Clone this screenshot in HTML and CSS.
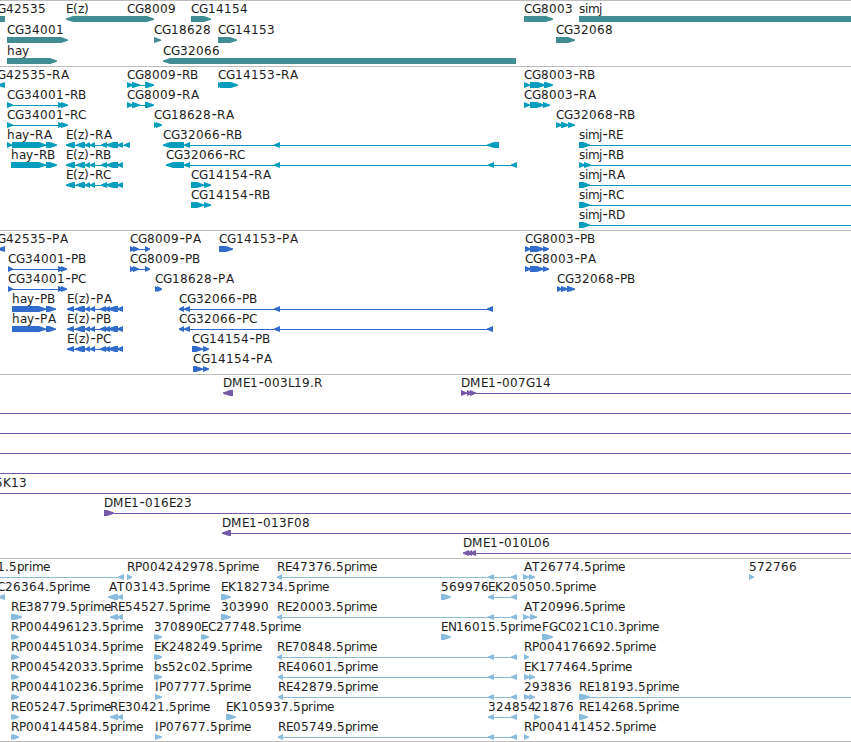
FILE: index.html
```
<!DOCTYPE html>
<html lang="en">
<head>
<meta charset="utf-8">
<title>Genome tracks</title>
<link rel="stylesheet" href="styles.css">
</head>
<body>
<main class="browser" id="browser"></main>
<script src="tracks.js"></script>
</body>
</html>
```
FILE: styles.css
```
body {
  margin: 0;
  background: #fff;
}

.browser {
  display: flex;
  flex-direction: column;
  width: 851px;
  height: 742px;
  box-sizing: border-box;
  overflow: hidden;
  border-bottom: 1px solid #bdbdbd;
}

.track {
  display: flex;
  flex-direction: column;
  flex: none;
  border-top: 1px solid #bdbdbd;
  padding-bottom: 3px;
}

.row {
  display: block;
  flex: none;
  width: 851px;
  height: 20px;
  overflow: visible;
}

.row text {
  font-family: "DejaVu Sans", sans-serif;
  font-size: 12px;
  fill: #1c1c1c;
}

.row .dash {
  font-size: 15px;
}

.row path {
  fill: currentColor;
}

.gene {
  color: #408e94;
  padding-bottom: 2px;
}

.gene .row {
  height: 21px;
}

.transcript {
  color: #059dbd;
}

.protein {
  color: #316ccc;
}

.bac {
  color: #7558a8;
}

.est {
  color: #89bbdd;
  padding-bottom: 2px;
}
```
FILE: tracks.js
```
// Each feature: "label|start|strand|exons". Strand is +, - or = (no arrow).
// An exon that ends in * runs on past the edge of the view.
const EZ = '66-75,76-85,85-90,90-95,101-107,106-118,117-123';
const EZP = '67-74,75-85,85-90,90-95,100-106,104-110,108-118,117-123';
const RE = ',488-494,511-517';
const tracks = [
  ['gene', [
    ['CG42535|-11|=|-5-5', 'E(z)|66|-|66-140', 'CG8009|127|+|127-154', 'CG14154|191|+|191-211', 'CG8003|524|+|524-553', 'simj|579|=|579-860'],
    ['CG34001|7|+|7-68', 'CG18628|154|+|154-161', 'CG14153|218|+|218-237', 'CG32068|556|+|556-575'],
    ['hay|7|+|7-57', 'CG32066|163|-|163-516']
  ]],
  ['transcript', [
    ['CG42535-RA|-11|-|-2-5', 'CG8009-RB|127|+|127-133,132-140,145-154', 'CG14153-RA|218|+|218-223,220-238', 'CG8003-RB|524|+|524-530,530-545,544-553'],
    ['CG34001-RB|7|+|7-13,58-64,61-68', 'CG8009-RA|127|+|127-133,132-140,145-154', 'CG8003-RA|524|+|524-530,530-544,543-550'],
    ['CG34001-RC|7|+|7-13,58-64,61-68', 'CG18628-RA|154|+|154-159,156-162', 'CG32068-RB|556|+|556-562,561-569,568-575'],
    ['hay-RA|7|+|7-12,12-46,46-57', 'E(z)-RA|66|-|' + EZ + ',124-130', 'CG32066-RB|163|-|163-184,184-190,274-280,487-499', 'simj-RE|579|+|579-590,*'],
    ['hay-RB|11|+|11-46,46-57', 'E(z)-RB|66|-|' + EZ, 'CG32066-RC|166|-|166-184,184-190,274-280,488-494,511-517', 'simj-RB|579|+|579-585,584-591,*'],
    ['E(z)-RC|66|-|' + EZ, 'CG14154-RA|191|+|191-204,204-211', 'simj-RA|579|+|579-590,*'],
    ['CG14154-RB|191|+|191-204,204-211', 'simj-RC|579|+|579-590,*'],
    ['simj-RD|579|+|579-590,*']
  ]],
  ['protein', [
    ['CG42535-PA|-11|-|-2-5', 'CG8009-PA|130|+|130-135,133-139,145-150', 'CG14153-PA|219|+|219-233', 'CG8003-PB|525|+|525-531,530-544,543-549'],
    ['CG34001-PB|8|+|8-13,58-64,61-67', 'CG8009-PB|130|+|130-135,133-139,145-150', 'CG8003-PA|525|+|525-531,530-544,543-549'],
    ['CG34001-PC|8|+|8-13,58-64,61-67', 'CG18628-PA|155|+|155-159,157-162', 'CG32068-PB|557|+|557-562,561-568,567-575'],
    ['hay-PB|12|+|12-46,46-56', 'E(z)-PA|67|-|' + EZP, 'CG32066-PB|179|-|179-184,184-190,274-280,487-493'],
    ['hay-PA|12|+|12-46,46-56', 'E(z)-PB|67|-|' + EZP, 'CG32066-PC|179|-|179-184,184-190,274-280,487-493'],
    ['E(z)-PC|67|-|' + EZP, 'CG14154-PB|192|+|192-203,203-209'],
    ['CG14154-PA|193|+|193-203,203-209']
  ]],
  ['bac', [
    ['DME1-003L19.R|223|-|223-233', 'DME1-007G14|461|+|461-467,467-472,470-476,*'],
    ['|-10|+|*'], ['|-10|+|*'], ['|-10|+|*'], ['|-10|+|*'],
    ['5K13|-5|+|*'],
    ['DME1-016E23|104|+|104-114,*'],
    ['DME1-013F08|222|-|222-231,*'],
    ['DME1-010L06|463|-|463-469,467-472,470-476,*']
  ]],
  ['est', [
    ['1.5prime|-3|-|-9--4,118-124', 'RP004242978.5prime|127|+|127-132', 'RE47376.5prime|277|-|277-282' + RE, 'AT26774.5prime|523|+|523-529,529-535', '572766|749|+|749-754'],
    ['C26364.5prime|-3|-|-2-5', 'AT03143.5prime|108|-|108-118,117-123', 'EK182734.5prime|221|+|221-231', '569976|441|+|441-451', 'EK205050.5prime|488|-|488-494,511-517'],
    ['RE38779.5prime|11|+|11-22', 'RE54527.5prime|110|-|110-118,117-123', '303990|221|+|221-231', 'RE20003.5prime|277|-|277-282' + RE, 'AT20996.5prime|523|+|523-529,530-537'],
    ['RP004496123.5prime|11|+|11-16,13-19', '370890|154|+|154-159,156-162', 'EC27748.5prime|201|+|201-206,203-209', 'EN16015.5prime|441|+|441-451', 'FGC021C10.3prime|542|+|542-553'],
    ['RP004451034.5prime|11|+|11-16,13-19', 'EK248249.5prime|154|+|154-159,156-162', 'RE70848.5prime|277|-|277-282' + RE, 'RP004176692.5prime|524|+|524-529'],
    ['RP004542033.5prime|11|+|11-16,13-19', 'bs52c02.5prime|154|+|154-159,156-162', 'RE40601.5prime|278|-|278-283' + RE, 'EK177464.5prime|524|+|524-530,529-535'],
    ['RP004410236.5prime|11|+|11-16,13-19', 'IP07777.5prime|155|+|155-162', 'RE42879.5prime|278|-|278-283' + RE, '293836|524|+|524-530,529-535', 'RE18193.5prime|579|+|579-590,*'],
    ['RE05247.5prime|11|+|11-16,13-19', 'RE30421.5prime|110|-|110-118,117-123', 'EK105937.5prime|226|+|226-236', '324854|488|-|488-494,511-517', '21876|534|+|534-540', 'RE14268.5prime|579|+|579-588'],
    ['RP004144584.5prime|11|+|11-16,13-19', 'IP07677.5prime|155|+|155-162', 'RE05749.5prime|278|-|278-283' + RE, 'RP004141452.5prime|524|+|524-529']
  ]]
];

// Whole-pixel character advances for the label font.
const advances = { A: 9, E: 7, G: 9, D: 9, M: 11, P: 7, T: 8, F: 7, I: 4, L: 6, '-': 6, '.': 4, '(': 5, ')': 5, z: 6, h: 8, a: 7, y: 7, s: 6, i: 3, m: 11, j: 3, p: 7, r: 5, e: 7, c: 7 };

// Characters that sit off their cell's left edge.
const bearings = { A: 1, '-': 0.5 };

function label(text, start) {
  let x = start;
  const xs = [];
  for (const ch of text) {
    xs.push(x + (bearings[ch] || 0));
    x += advances[ch] || 8;
  }
  return `<text x="${xs.join(' ')}" y="12">${text.replace('-', '<tspan class="dash">-</tspan>')}</text>`;
}

function exon(a, b, strand) {
  if (strand === '=') return `M${a} 15H${b}V21H${a}Z`;
  const tip = Math.min(b - a, 7);
  if (strand === '+') return `M${a} 15H${b - tip}L${b} 17.5V18.8L${b - tip} 21H${a}Z`;
  return `M${b} 15H${a + tip}L${a} 17.5V18.8L${a + tip} 21H${b}Z`;
}

function feature(spec) {
  const [name, startText, strand, list] = spec.split('|');
  const start = Number(startText);
  let end = start;
  let d = '';
  for (const part of list.split(',')) {
    if (part === '*') { end = 860; continue; }
    const m = part.match(/^(-?\d+)-(-?\d+)$/);
    d += `<path d="${exon(Number(m[1]), Number(m[2]), strand)}"/>`;
    end = Math.max(end, Number(m[2]));
  }
  if (list.includes(',') || list === '*') d += `<path d="M${start} 18H${end - 1}V19H${start}Z"/>`;
  return d + (name ? label(name, start) : '');
}

document.getElementById('browser').innerHTML = tracks.map(([kind, rows]) =>
  `<section class="track ${kind}">` +
  rows.map(row => `<svg class="row">${row.map(feature).join('')}</svg>`).join('') +
  '</section>').join('');
```
